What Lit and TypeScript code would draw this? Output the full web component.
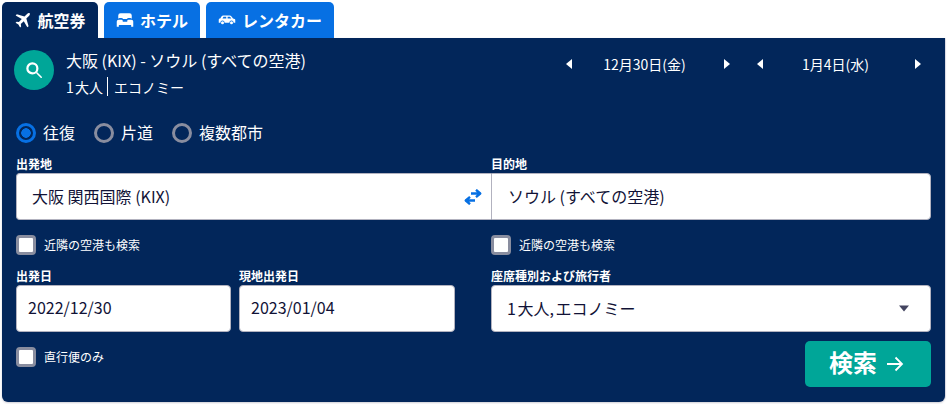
import { LitElement, html, css } from "lit";
import { customElement } from "lit/decorators.js";

const plane = html`<svg class="tabicon" viewBox="0 0 24 24" width="17" height="17"><path fill="#fff" d="M22.6 2.2c-1-1-2.7-.9-3.8.2l-4 4L4 3.2 2.3 5l8.700 5-4.100 4.200-3.200-.5L2.200 15.200l4 2.300 2.400 4.300 1.500-1.500-.5-3.200 4.200-4.100 5 8.700 1.800-1.700-3.200-10.800 4-4c1.100-1.100 1.300-2.100.7-3z"/></svg>`;
const bed = html`<svg class="tabicon" viewBox="0 0 24 24" width="18" height="18"><path fill="#fff" d="M6 3h12a3 3 0 0 1 3 3v4.200a3 3 0 0 0-2-.9h-2.200a2.500 2.500 0 0 0-2.300 1.500h-5A2.500 2.500 0 0 0 7.200 9.300H5a3 3 0 0 0-2 .9V6a3 3 0 0 1 3-3zM1 14a2.500 2.500 0 0 1 2.500-2.500h3.800A1.700 1.700 0 0 1 9 13.200v1h6v-1a1.700 1.700 0 0 1 1.700-1.700h3.800A2.500 2.500 0 0 1 23 14v7h-2.800v-2.500H3.800V21H1z"/></svg>`;
const car = html`<svg class="tabicon" viewBox="0 0 24 24" width="18" height="18"><path fill="#fff" d="M7 6h8.500c1 0 1.900.5 2.500 1.300L20 10l2.200.8c.5.200.8.700.8 1.200v3.500h-2.200a2.800 2.800 0 0 0-5.600 0H8.800a2.800 2.800 0 0 0-5.600 0H1v-3.800C1 10.700 1.800 10 3 10l1.600-2.600C5.200 6.500 6 6 7 6zm.3 1.800L6 10h5V7.800zm5.500 0V10h5l-1.300-1.600c-.3-.4-.7-.6-1.200-.6zM6 13.800a2 2 0 1 1 0 4 2 2 0 0 1 0-4zm12 0a2 2 0 1 1 0 4 2 2 0 0 1 0-4z"/></svg>`;

@customElement("date-stepper")
class DateStepper extends LitElement {
  static properties = { text: {} };
  text = "";
  static styles = css`
    :host { display: flex; width: 164px; height: 20px; align-items: center; justify-content: space-between; color: #fff; font-size: 14px; line-height: 20px; }
    svg { display: block; flex: none; }
    span { white-space: nowrap; margin-right: 7px; }
  `;
  render() {
    return html`
      <svg viewBox="0 0 6 10" width="6" height="10"><path fill="#fff" d="M6 0v10L0 5z"/></svg>
      <span>${this.text}</span>
      <svg viewBox="0 0 6 10" width="6" height="10"><path fill="#fff" d="M0 0v10l6-5z"/></svg>
    `;
  }
}

@customElement("app-root")
export class AppRoot extends LitElement {
  static styles = css`
    :host {
      display: block; width: 948px; height: 404px; box-sizing: border-box; padding: 2px 3px 2px 2px;
      background: #fff; font-family: "Noto Sans CJK JP", Inter, sans-serif; color: #fff;
    }
    .tabs { display: flex; gap: 6px; height: 36px; }
    .tab {
      display: flex; align-items: center; justify-content: center; gap: 6px; height: 36px; box-sizing: border-box;
      background: #0770e3; border-radius: 5px 5px 0 0; font-size: 16px; line-height: 20px; font-weight: 700; white-space: nowrap;
    }
    .tab.active { background: #02265a; }
    .t1 { width: 96px; } .t2 { width: 96px; } .t3 { width: 128px; }
    .tabicon { display: block; flex: none; }
    .panel {
      height: 364px; box-sizing: border-box; background: #02265a; border-radius: 0 0 6px 6px;
      padding: 12px 14px 15px; display: flex; flex-direction: column;
      box-shadow: 0 1px 2px rgba(60, 60, 90, .25), 1px 0 0 #e9e9f0;
    }
    .head { display: flex; height: 40px; align-items: flex-start; }
    .circle { width: 40px; height: 40px; margin-left: -2px; border-radius: 50%; background: #00a698; display: flex; align-items: center; justify-content: center; flex: none; }
    .circle svg { display: block; margin-left: 1px; }
    .sum { margin-left: 12px; }
    .route { font-size: 16px; line-height: 20px; height: 20px; white-space: nowrap; }
    .sub { display: flex; align-items: center; margin-top: 6px; height: 21px; font-size: 14px; line-height: 20px; word-spacing: -2px; }
    .sub i { width: 1px; height: 19px; background: #fff; margin: 0 6px 0 4px; }
    .dates { display: flex; gap: 27px; margin-left: auto; margin-right: 10px; margin-top: 4px; }
    .radios { display: flex; align-items: center; margin-top: 33px; height: 20px; font-size: 16px; line-height: 20px; }
    .radio { display: flex; align-items: center; gap: 7px; margin-right: 19px; }
    .radio span:last-child { padding-bottom: 2px; }
    .dot { width: 14px; height: 14px; border: 3px solid #898d9f; border-radius: 50%; background: transparent; }
    .dot.on { border-color: #0770e3; background: radial-gradient(circle, #0770e3 0 4.500px, transparent 5px); }
    .route-grid { display: grid; grid-template-columns: 475px 440px; margin-top: 13px; }
    .lab { display: block; font-size: 12px; font-weight: 700; line-height: 16px; height: 17px; white-space: nowrap; }
    .box {
      box-sizing: border-box; height: 47px; background: #fff; border: 1px solid #b2b2bf; color: #111236;
      display: flex; align-items: center; font-size: 16px; line-height: 20px; white-space: nowrap; padding-bottom: 2px;
    }
    .from { border-radius: 4px 0 0 4px; padding-left: 15px; border-right: 0; justify-content: space-between; padding-right: 9px; }
    .to { border-radius: 0 4px 4px 0; padding-left: 16px; }
    .swap { display: block; margin-top: 2px; }
    .check { display: flex; align-items: center; gap: 8px; height: 20px; font-size: 12px; line-height: 16px; white-space: nowrap; }
    .cb { box-sizing: border-box; width: 20px; height: 20px; border: 3px solid #898d9f; border-radius: 4px; background: #fff; flex: none; }
    .checks { display: grid; grid-template-columns: 475px 440px; margin-top: 15px; }
    .dates-grid { display: grid; grid-template-columns: 215px 224px 476px; margin-top: 13px; }
    .d2 { margin-left: 8px; }
    .d3 { margin-left: 36px; }
    .field .box { border-radius: 4px; padding-left: 11px; padding-bottom: 4px; }
    .d3 .box { padding-left: 15px; padding-right: 21px; padding-bottom: 1px; justify-content: space-between; word-spacing: -2px; }
    .caret { display: block; }
    .bottom { display: flex; justify-content: space-between; align-items: flex-start; margin-top: 9px; }
    .bottom .check { margin-top: 6px; }
    .go {
      width: 126px; height: 46px; border: 0; border-radius: 5px; background: #00a698; color: #fff; padding: 0 3px 0 0;
      display: flex; align-items: center; justify-content: center; gap: 9px; font: 700 24px "Noto Sans CJK JP", sans-serif;
    }
    .go span { line-height: 28px; padding-bottom: 4px; }
    .go svg { display: block; }
  `;

  render() {
    return html`
      <div class="tabs">
        <div class="tab active t1">${plane}<span>航空券</span></div>
        <div class="tab t2">${bed}<span>ホテル</span></div>
        <div class="tab t3">${car}<span>レンタカー</span></div>
      </div>
      <div class="panel">
        <div class="head">
          <div class="circle">
            <svg viewBox="0 0 16 16" width="17" height="17"><circle cx="6" cy="6" r="4.700" fill="none" stroke="#fff" stroke-width="2.100"/><path d="M10.300 10.300l4 4" stroke="#fff" stroke-width="1.500" stroke-linecap="round"/></svg>
          </div>
          <div class="sum">
            <div class="route">大阪 (KIX) - ソウル (すべての空港)</div>
            <div class="sub"><span>1 大人</span><i></i><span>エコノミー</span></div>
          </div>
          <div class="dates">
            <date-stepper text="12月30日(金)"></date-stepper>
            <date-stepper text="1月4日(水)"></date-stepper>
          </div>
        </div>
        <div class="radios">
          <div class="radio"><span class="dot on"></span><span>往復</span></div>
          <div class="radio"><span class="dot"></span><span>片道</span></div>
          <div class="radio"><span class="dot"></span><span>複数都市</span></div>
        </div>
        <div class="route-grid">
          <div>
            <div class="lab">出発地</div>
            <div class="box from"><span>大阪 関西国際 (KIX)</span>
              <svg class="swap" viewBox="0 0 18 16" width="18" height="16"><path fill="none" stroke="#0770e3" stroke-width="2.400" stroke-linejoin="round" d="M17 4.500H7M12 .800l4.200 3.700L12 8.200"/><path fill="none" stroke="#0770e3" stroke-width="2.400" stroke-linejoin="round" d="M1 11.500h10M6 7.800l-4.200 3.700L6 15.200"/></svg>
            </div>
          </div>
          <div>
            <div class="lab">目的地</div>
            <div class="box to">ソウル (すべての空港)</div>
          </div>
        </div>
        <div class="checks">
          <div class="check"><span class="cb"></span>近隣の空港も検索</div>
          <div class="check"><span class="cb"></span>近隣の空港も検索</div>
        </div>
        <div class="dates-grid">
          <div class="field d1"><div class="lab">出発日</div><div class="box">2022/12/30</div></div>
          <div class="field d2"><div class="lab">現地出発日</div><div class="box">2023/01/04</div></div>
          <div class="field d3"><div class="lab">座席種別および旅行者</div><div class="box"><span>1 大人, エコノミー</span>
            <svg class="caret" viewBox="0 0 10 7" width="10" height="7"><path fill="#444560" d="M0 .500h10L5 6.500z"/></svg>
          </div></div>
        </div>
        <div class="bottom">
          <div class="check"><span class="cb"></span>直行便のみ</div>
          <button class="go"><span>検索</span>
            <svg viewBox="0 0 18 16" width="18" height="16"><path fill="none" stroke="#fff" stroke-width="1.800" d="M1 8h15M9.500 1.500L16 8l-6.500 6.500"/></svg>
          </button>
        </div>
      </div>
    `;
  }
}
void DateStepper;
